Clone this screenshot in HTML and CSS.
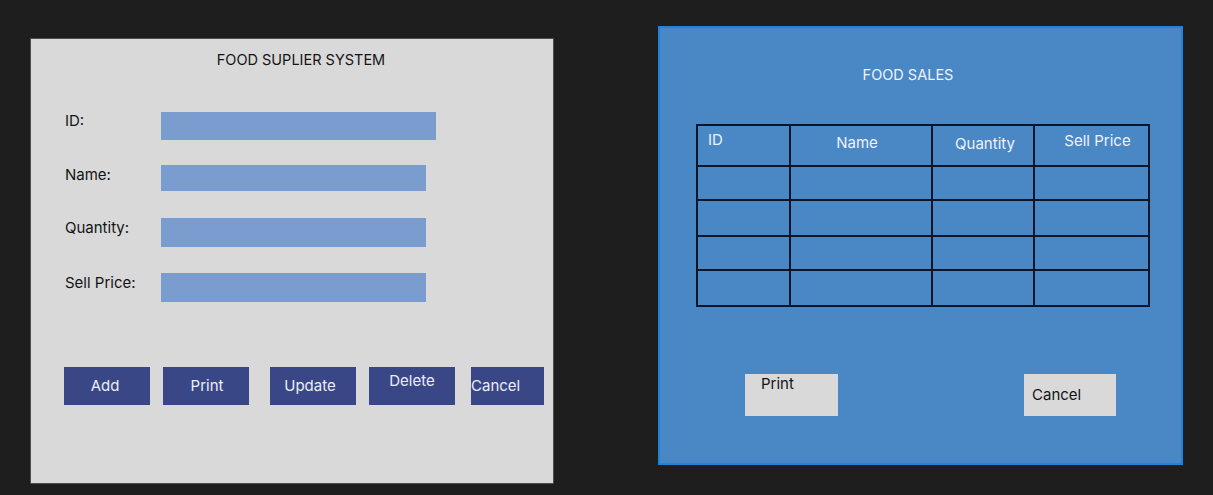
FILE: index.html
```html
<!DOCTYPE html>
<html>
<head>
<meta charset="utf-8">
<link rel="stylesheet" href="styles.css">
</head>
<body>
<div class="stage">
  <section class="supplier">
    <h1 class="supplier-title">FOOD SUPLIER SYSTEM</h1>
    <div class="form">
      <div class="row row-id"><span class="label">ID:</span><span class="field field-id"></span></div>
      <div class="row row-name"><span class="label">Name:</span><span class="field field-name"></span></div>
      <div class="row row-qty"><span class="label">Quantity:</span><span class="field field-qty"></span></div>
      <div class="row row-price"><span class="label">Sell Price:</span><span class="field field-price"></span></div>
    </div>
    <div class="actions">
      <div class="btn btn-add">Add</div>
      <div class="btn btn-print">Print</div>
      <div class="btn btn-update">Update</div>
      <div class="btn btn-delete">Delete</div>
      <div class="btn btn-cancel">Cancel</div>
    </div>
  </section>

  <section class="sales">
    <h2 class="sales-title">FOOD SALES</h2>
    <div class="grid">
      <div class="cell head head-id">ID</div>
      <div class="cell head head-name">Name</div>
      <div class="cell head head-qty">Quantity</div>
      <div class="cell head head-price">Sell Price</div>
      <div class="cell"></div><div class="cell"></div><div class="cell"></div><div class="cell"></div>
      <div class="cell"></div><div class="cell"></div><div class="cell"></div><div class="cell"></div>
      <div class="cell"></div><div class="cell"></div><div class="cell"></div><div class="cell"></div>
      <div class="cell"></div><div class="cell"></div><div class="cell"></div><div class="cell"></div>
    </div>
    <div class="sales-actions">
      <div class="lbtn lbtn-print">Print</div>
      <div class="lbtn lbtn-cancel">Cancel</div>
    </div>
  </section>
</div>
</body>
</html>
```

FILE: styles.css
```css
* { box-sizing: border-box; }
html, body { margin: 0; padding: 0; }
body {
  background: #1e1e1e;
  font-family: Inter, "Noto Sans", sans-serif;
  width: 1213px;
  height: 495px;
  overflow: hidden;
}
.stage {
  display: flex;
  align-items: flex-start;
  padding-left: 30px;
  gap: 104px;
}

/* Left panel */
.supplier {
  width: 524px;
  height: 446px;
  margin-top: 38px;
  background: #d9d9d9;
  border: 1px solid #4e4e4e;
  color: #141414;
}
.supplier-title {
  margin: 0;
  padding: 11px 0 0 18px;
  font-size: 14.5px;
  font-weight: 400;
  line-height: 20px;
  text-align: center;
}
.form {
  display: flex;
  flex-direction: column;
  padding-left: 34px;
  margin-top: 42px;
}
.row {
  display: flex;
  align-items: flex-start;
}
.label {
  width: 96px;
  font-size: 15px;
  line-height: 20px;
}
.row-id .label { margin-top: -1px; }
.field {
  display: block;
  background: #7b9ccf;
}
.field-id { width: 275px; height: 28px; }
.field-name { width: 265px; height: 26px; }
.field-qty { width: 265px; height: 29px; }
.field-price { width: 265px; height: 29px; }
.row-name { margin-top: 25px; }
.row-qty { margin-top: 27px; }
.row-price { margin-top: 26px; }

.actions {
  display: flex;
  padding-left: 33px;
  margin-top: 65px;
}
.btn {
  width: 86px;
  height: 38px;
  background: #394787;
  color: #eceef6;
  font-size: 15px;
  line-height: 20px;
  display: flex;
  align-items: center;
  justify-content: center;
}
.btn-add { padding-right: 4px; }
.btn-print { margin-left: 13px; padding-left: 2px; }
.btn-update { margin-left: 21px; padding-right: 6px; }
.btn-delete { margin-left: 13px; align-items: flex-start; padding-top: 4px; }
.btn-cancel { margin-left: 16px; width: 73px; justify-content: flex-start; }

/* Right panel */
.sales {
  width: 525px;
  height: 439px;
  margin-top: 26px;
  background: #4a87c5;
  border: 2px solid #1f84d6;
  color: #eef3fb;
}
.sales-title {
  margin: 0;
  padding: 37px 25px 0 0;
  font-size: 14.5px;
  font-weight: 400;
  line-height: 20px;
  text-align: center;
}
.grid {
  display: grid;
  grid-template-columns: 91px 140px 100px 113px;
  grid-template-rows: 39px 32px 34px 32px 34px;
  gap: 2px;
  padding: 2px;
  background: #0d1628;
  width: 454px;
  margin: 39px 0 0 36px;
}
.cell { background: #4a87c5; }
.head { font-size: 15px; line-height: 20px; }
.head-id { padding: 4px 0 0 10px; }
.head-name { padding-top: 7px; text-align: center; padding-right: 8px; }
.head-qty { padding-top: 8px; text-align: center; padding-left: 4px; }
.head-price { padding-top: 5px; text-align: center; padding-left: 12px; }

.sales-actions {
  display: flex;
  margin: 67px 0 0 85px;
  gap: 186px;
}
.lbtn {
  width: 93px;
  height: 42px;
  background: #d9d9d9;
  color: #141414;
  font-size: 15px;
  line-height: 20px;
}
.lbtn-print { padding: 0 0 0 16px; }
.lbtn-cancel { width: 92px; padding: 11px 0 0 8px; }
```
